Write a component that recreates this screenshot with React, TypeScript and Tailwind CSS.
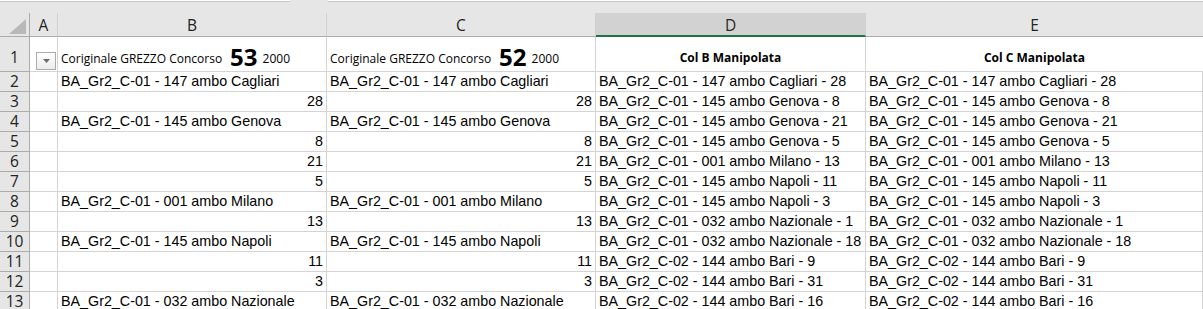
const rows: [string, string, string][] = [
  ["BA_Gr2_C-01 - 147 ambo Cagliari", "BA_Gr2_C-01 - 147 ambo Cagliari", "BA_Gr2_C-01 - 147 ambo Cagliari - 28"],
  ["28", "28", "BA_Gr2_C-01 - 145 ambo Genova - 8"],
  ["BA_Gr2_C-01 - 145 ambo Genova", "BA_Gr2_C-01 - 145 ambo Genova", "BA_Gr2_C-01 - 145 ambo Genova - 21"],
  ["8", "8", "BA_Gr2_C-01 - 145 ambo Genova - 5"],
  ["21", "21", "BA_Gr2_C-01 - 001 ambo Milano - 13"],
  ["5", "5", "BA_Gr2_C-01 - 145 ambo Napoli - 11"],
  ["BA_Gr2_C-01 - 001 ambo Milano", "BA_Gr2_C-01 - 001 ambo Milano", "BA_Gr2_C-01 - 145 ambo Napoli - 3"],
  ["13", "13", "BA_Gr2_C-01 - 032 ambo Nazionale - 1"],
  ["BA_Gr2_C-01 - 145 ambo Napoli", "BA_Gr2_C-01 - 145 ambo Napoli", "BA_Gr2_C-01 - 032 ambo Nazionale - 18"],
  ["11", "11", "BA_Gr2_C-02 - 144 ambo Bari - 9"],
  ["3", "3", "BA_Gr2_C-02 - 144 ambo Bari - 31"],
  ["BA_Gr2_C-01 - 032 ambo Nazionale", "BA_Gr2_C-01 - 032 ambo Nazionale", "BA_Gr2_C-02 - 144 ambo Bari - 16"],
];

const isNum = (s: string) => /^\d+$/.test(s);

function Cell({ text, wide }: { text: string; wide?: boolean }) {
  const num = isNum(text);
  return (
    <div
      className={`h-5 border-r border-b border-[#d4d4d4] bg-white px-[3px] flex items-center whitespace-nowrap text-[14.3px] text-black ${
        num ? "justify-end" : "justify-start"
      } ${wide ? "overflow-visible z-10" : "overflow-hidden"}`}
      style={{ fontFamily: '"Liberation Sans", Arial, sans-serif' }}
    >
      {text}
    </div>
  );
}

function RowHead({ n, tall }: { n: number; tall?: boolean }) {
  return (
    <div
      className={`${tall ? "h-[35px] items-end pb-[2px]" : "h-5 items-center pt-[1px]"} flex justify-center bg-[#e6e6e6] border-r border-b border-[#ababab] text-[15.5px] text-[#222]`}
    >
      {n}
    </div>
  );
}

function ColHead({ label, selected, last }: { label: string; selected?: boolean; last?: boolean }) {
  if (selected) {
    return (
      <div className="h-6 bg-[#d2d2d2] border-r border-r-[#d0d0d0] border-b-2 border-b-[#217346] flex items-center justify-center pt-[4px] text-[15.5px] text-[#262626]">
        {label}
      </div>
    );
  }
  return (
    <div
      className={`h-6 border-b border-[#ababab] ${last ? "" : "border-r border-r-[#d0d0d0]"} flex items-center justify-center pt-[3px] text-[15.5px] text-[#222]`}
    >
      {label}
    </div>
  );
}

function TitleCell({ big }: { big: string }) {
  return (
    <div className="h-[35px] bg-white border-r border-b border-[#d4d4d4] flex items-end pl-[3px] pb-[3px] whitespace-nowrap text-black">
      <span className="text-[12px]">Coriginale GREZZO Concorso</span>
      <span className="text-[24px] font-bold leading-[28px] ml-[8px] mb-[-3px]">{big}</span>
      <span className="text-[12px] ml-[5px]">2000</span>
    </div>
  );
}

export default function App() {
  const font = { fontFamily: '"Open Sans", "Noto Sans", sans-serif' };
  return (
    <div className="w-[1203px] h-[309px] overflow-hidden bg-[#e6e6e6] select-none" style={font}>
      {/* formula bar edge */}
      <div className="flex h-[2px] gap-[40px]">
        <div className="w-[290px] bg-white border-b border-[#c6c6c6]" />
        <div className="flex-1 bg-white border-b border-[#c6c6c6] ml-[-2px]" />
      </div>

      <div className="grid grid-cols-[30px_28px_269px_269px_270px_337px] mt-[11px]">
        {/* column headers */}
        <div className="h-6 border-r border-b border-[#ababab] flex items-end justify-end pr-[3px] pb-[2px]">
          <svg width="17" height="15" viewBox="0 0 17 15">
            <polygon points="17,0 17,15 0,15" fill="#b8b8b8" />
          </svg>
        </div>
        <ColHead label="A" />
        <ColHead label="B" />
        <ColHead label="C" />
        <ColHead label="D" selected />
        <ColHead label="E" last />

        {/* row 1 */}
        <RowHead n={1} tall />
        <div className="h-[35px] bg-white border-r border-b border-[#d4d4d4] flex items-end justify-end pr-[1px] pb-[1px]">
          <div className="w-[20px] h-[18px] border border-[#ababab] bg-gradient-to-b from-white to-[#ececec] flex items-center justify-center">
            <svg width="7" height="4" viewBox="0 0 7 4">
              <polygon points="0,0 7,0 3.5,4" fill="#6b6b6b" />
            </svg>
          </div>
        </div>
        <TitleCell big="53" />
        <TitleCell big="52" />
        <div className="h-[35px] bg-white border-r border-b border-[#d4d4d4] flex items-end justify-center pb-[4px] text-[12px] font-bold text-black">
          Col B Manipolata
        </div>
        <div className="h-[35px] bg-white border-b border-[#d4d4d4] flex items-end justify-center pb-[4px] text-[12px] font-bold text-black">
          Col C Manipolata
        </div>

        {rows.map(([b, c, d], i) => (
          <div key={i} className="contents">
            <RowHead n={i + 2} />
            <Cell text="" />
            <Cell text={b} />
            <Cell text={c} />
            <Cell text={d} wide />
            <Cell text={d} />
          </div>
        ))}
      </div>
    </div>
  );
}
